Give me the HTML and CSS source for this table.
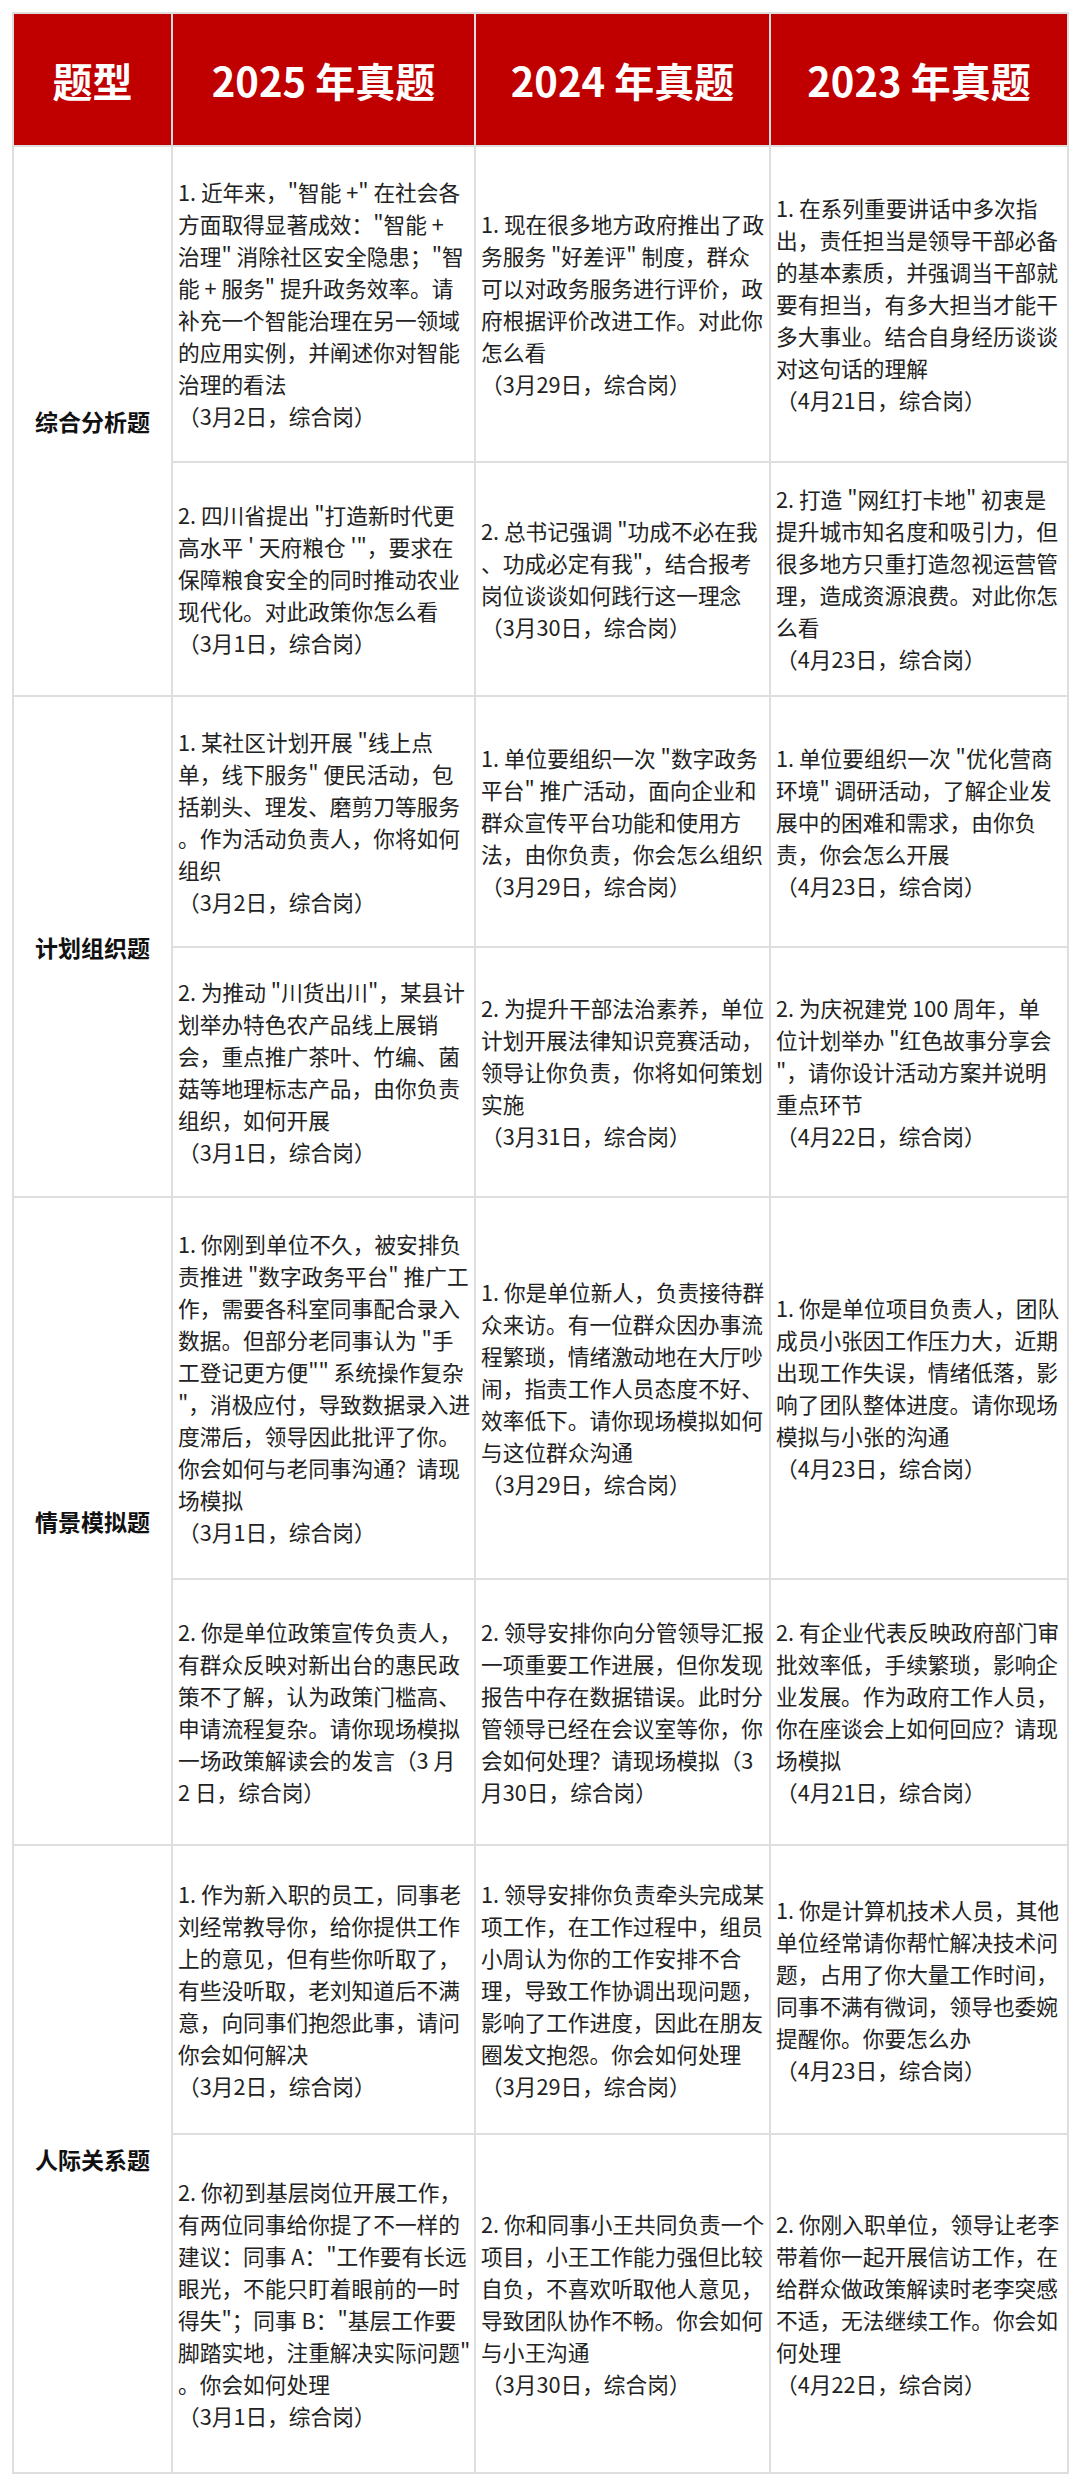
FILE: index.html
```html
<!DOCTYPE html>
<html lang="zh-CN">
<head>
<meta charset="utf-8">
<title>真题汇总</title>
<link rel="stylesheet" href="styles.css">
</head>
<body>
<table class="exam">
  <colgroup>
    <col class="c-type">
    <col class="c-2025">
    <col class="c-2024">
    <col class="c-2023">
  </colgroup>
  <thead>
    <tr class="head">
      <th>题型</th>
      <th>2025 年真题</th>
      <th>2024 年真题</th>
      <th>2023 年真题</th>
    </tr>
  </thead>
  <tbody>
    <tr class="r1a">
      <td class="type" rowspan="2">综合分析题</td>
      <td>1. 近年来，"智能 +" 在社会各<br>方面取得显著成效："智能 +<br>治理" 消除社区安全隐患；"智<br>能 + 服务" 提升政务效率。请<br>补充一个智能治理在另一领域<br>的应用实例，并阐述你对智能<br>治理的看法<br>（3月2日，综合岗）</td>
      <td>1. 现在很多地方政府推出了政<br>务服务 "好差评" 制度，群众<br>可以对政务服务进行评价，政<br>府根据评价改进工作。对此你<br>怎么看<br>（3月29日，综合岗）</td>
      <td>1. 在系列重要讲话中多次指<br>出，责任担当是领导干部必备<br>的基本素质，并强调当干部就<br>要有担当，有多大担当才能干<br>多大事业。结合自身经历谈谈<br>对这句话的理解<br>（4月21日，综合岗）</td>
    </tr>
    <tr class="r1b">
      <td>2. 四川省提出 "打造新时代更<br>高水平 ' 天府粮仓 '"，要求在<br>保障粮食安全的同时推动农业<br>现代化。对此政策你怎么看<br>（3月1日，综合岗）</td>
      <td>2. 总书记强调 "功成不必在我<br>、功成必定有我"，结合报考<br>岗位谈谈如何践行这一理念<br>（3月30日，综合岗）</td>
      <td>2. 打造 "网红打卡地" 初衷是<br>提升城市知名度和吸引力，但<br>很多地方只重打造忽视运营管<br>理，造成资源浪费。对此你怎<br>么看<br>（4月23日，综合岗）</td>
    </tr>
    <tr class="r2a">
      <td class="type" rowspan="2">计划组织题</td>
      <td>1. 某社区计划开展 "线上点<br>单，线下服务" 便民活动，包<br>括剃头、理发、磨剪刀等服务<br>。作为活动负责人，你将如何<br>组织<br>（3月2日，综合岗）</td>
      <td>1. 单位要组织一次 "数字政务<br>平台" 推广活动，面向企业和<br>群众宣传平台功能和使用方<br>法，由你负责，你会怎么组织<br>（3月29日，综合岗）</td>
      <td>1. 单位要组织一次 "优化营商<br>环境" 调研活动，了解企业发<br>展中的困难和需求，由你负<br>责，你会怎么开展<br>（4月23日，综合岗）</td>
    </tr>
    <tr class="r2b">
      <td>2. 为推动 "川货出川"，某县计<br>划举办特色农产品线上展销<br>会，重点推广茶叶、竹编、菌<br>菇等地理标志产品，由你负责<br>组织，如何开展<br>（3月1日，综合岗）</td>
      <td>2. 为提升干部法治素养，单位<br>计划开展法律知识竞赛活动，<br>领导让你负责，你将如何策划<br>实施<br>（3月31日，综合岗）</td>
      <td>2. 为庆祝建党 100 周年，单<br>位计划举办 "红色故事分享会<br>"，请你设计活动方案并说明<br>重点环节<br>（4月22日，综合岗）</td>
    </tr>
    <tr class="r3a">
      <td class="type" rowspan="2">情景模拟题</td>
      <td>1. 你刚到单位不久，被安排负<br>责推进 "数字政务平台" 推广工<br>作，需要各科室同事配合录入<br>数据。但部分老同事认为 "手<br>工登记更方便"" 系统操作复杂<br>"，消极应付，导致数据录入进<br>度滞后，领导因此批评了你。<br>你会如何与老同事沟通？请现<br>场模拟<br>（3月1日，综合岗）</td>
      <td>1. 你是单位新人，负责接待群<br>众来访。有一位群众因办事流<br>程繁琐，情绪激动地在大厅吵<br>闹，指责工作人员态度不好、<br>效率低下。请你现场模拟如何<br>与这位群众沟通<br>（3月29日，综合岗）</td>
      <td>1. 你是单位项目负责人，团队<br>成员小张因工作压力大，近期<br>出现工作失误，情绪低落，影<br>响了团队整体进度。请你现场<br>模拟与小张的沟通<br>（4月23日，综合岗）</td>
    </tr>
    <tr class="r3b">
      <td>2. 你是单位政策宣传负责人，<br>有群众反映对新出台的惠民政<br>策不了解，认为政策门槛高、<br>申请流程复杂。请你现场模拟<br>一场政策解读会的发言（3 月<br>2 日，综合岗）</td>
      <td>2. 领导安排你向分管领导汇报<br>一项重要工作进展，但你发现<br>报告中存在数据错误。此时分<br>管领导已经在会议室等你，你<br>会如何处理？请现场模拟（3<br>月30日，综合岗）</td>
      <td>2. 有企业代表反映政府部门审<br>批效率低，手续繁琐，影响企<br>业发展。作为政府工作人员，<br>你在座谈会上如何回应？请现<br>场模拟<br>（4月21日，综合岗）</td>
    </tr>
    <tr class="r4a">
      <td class="type" rowspan="2">人际关系题</td>
      <td>1. 作为新入职的员工，同事老<br>刘经常教导你，给你提供工作<br>上的意见，但有些你听取了，<br>有些没听取，老刘知道后不满<br>意，向同事们抱怨此事，请问<br>你会如何解决<br>（3月2日，综合岗）</td>
      <td>1. 领导安排你负责牵头完成某<br>项工作，在工作过程中，组员<br>小周认为你的工作安排不合<br>理，导致工作协调出现问题，<br>影响了工作进度，因此在朋友<br>圈发文抱怨。你会如何处理<br>（3月29日，综合岗）</td>
      <td>1. 你是计算机技术人员，其他<br>单位经常请你帮忙解决技术问<br>题，占用了你大量工作时间，<br>同事不满有微词，领导也委婉<br>提醒你。你要怎么办<br>（4月23日，综合岗）</td>
    </tr>
    <tr class="r4b">
      <td>2. 你初到基层岗位开展工作，<br>有两位同事给你提了不一样的<br>建议：同事 A："工作要有长远<br>眼光，不能只盯着眼前的一时<br>得失"；同事 B："基层工作要<br>脚踏实地，注重解决实际问题"<br>。你会如何处理<br>（3月1日，综合岗）</td>
      <td>2. 你和同事小王共同负责一个<br>项目，小王工作能力强但比较<br>自负，不喜欢听取他人意见，<br>导致团队协作不畅。你会如何<br>与小王沟通<br>（3月30日，综合岗）</td>
      <td>2. 你刚入职单位，领导让老李<br>带着你一起开展信访工作，在<br>给群众做政策解读时老李突感<br>不适，无法继续工作。你会如<br>何处理<br>（4月22日，综合岗）</td>
    </tr>
  </tbody>
</table>
</body>
</html>
```

FILE: styles.css
```css
html, body {
  margin: 0;
  padding: 0;
  background: #ffffff;
}

body {
  font-family: "Noto Sans CJK SC", "Noto Sans", "Liberation Sans", sans-serif;
  color: #222222;
}

.exam {
  border-collapse: collapse;
  table-layout: fixed;
  width: 1057px;
  margin: 12px 0 0 12px;
}

.c-type { width: 159px; }
.c-2025 { width: 303px; }
.c-2024 { width: 295px; }
.c-2023 { width: 298px; }

.exam th,
.exam td {
  border: 2px solid #dedede;
}

.head {
  height: 133px;
}

.head th {
  background: #c00000;
  color: #ffffff;
  font-size: 40px;
  font-weight: 700;
  text-align: center;
  vertical-align: middle;
  padding: 0;
  line-height: 1.2;
}

.exam td {
  font-size: 21.7px;
  line-height: 32px;
  padding: 0 4px 0 5px;
  vertical-align: middle;
  text-align: left;
  white-space: nowrap;
  overflow: hidden;
}

.exam td.type {
  font-size: 23px;
  font-weight: 700;
  color: #111111;
  text-align: center;
  padding: 0;
}

.r1a { height: 316px; }
.r1b { height: 234px; }
.r2a { height: 251px; }
.r2b { height: 250px; }
.r3a { height: 382px; }
.r3b { height: 266px; }
.r4a { height: 289px; }
.r4b { height: 339px; }
```
